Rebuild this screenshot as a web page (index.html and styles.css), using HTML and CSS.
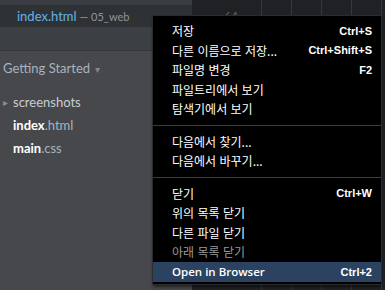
FILE: index.html
```html
<!DOCTYPE html>
<html lang="ko">
<head>
<meta charset="utf-8">
<link rel="stylesheet" href="styles.css">
</head>
<body>
<div class="app">
  <aside class="sidebar">
    <div class="top-strip"></div>
    <div class="open-file"><span class="fname">index.html</span><span class="fdir">— 05_web</span></div>
    <div class="band"></div>
    <div class="tree">
      <div class="project">Getting Started <span class="caret">▾</span></div>
      <div class="node folder"><span class="tri">▸</span>screenshots</div>
      <div class="node"><b>index</b>.html</div>
      <div class="node"><b>main</b>.css</div>
    </div>
  </aside>
  <main class="editor">
    <div class="col gutter"><span class="lineno">64</span></div>
    <div class="col"></div>
    <div class="col"></div>
    <div class="col"></div>
    <div class="col"></div>
    <div class="col last"></div>
  </main>
  <div class="menu">
    <div class="item"><span class="label">저장</span><span class="key">Ctrl+S</span></div>
    <div class="item"><span class="label">다른 이름으로 저장...</span><span class="key">Ctrl+Shift+S</span></div>
    <div class="item"><span class="label">파일명 변경</span><span class="key">F2</span></div>
    <div class="item"><span class="label">파일트리에서 보기</span></div>
    <div class="item"><span class="label">탐색기에서 보기</span></div>
    <div class="sep"></div>
    <div class="item"><span class="label">다음에서 찾기...</span></div>
    <div class="item"><span class="label">다음에서 바꾸기...</span></div>
    <div class="sep"></div>
    <div class="item"><span class="label">닫기</span><span class="key">Ctrl+W</span></div>
    <div class="item"><span class="label">위의 목록 닫기</span></div>
    <div class="item"><span class="label">다른 파일 닫기</span></div>
    <div class="item disabled"><span class="label">아래 목록 닫기</span></div>
    <div class="item active"><span class="label en">Open in Browser</span><span class="key">Ctrl+2</span></div>
  </div>
</div>
</body>
</html>
```

FILE: styles.css
```css
* { box-sizing: border-box; }
html, body { margin: 0; padding: 0; }
body {
  width: 385px;
  height: 290px;
  overflow: hidden;
  background: #1f2124;
  font-family: Lato, "Noto Sans", sans-serif;
}
.app {
  position: relative;
  display: flex;
  width: 385px;
  height: 290px;
  overflow: hidden;
}
.sidebar {
  width: 192px;
  flex: none;
  display: flex;
  flex-direction: column;
  background: #46484c;
}
.top-strip { height: 5px; background: #3a3d41; }
.open-file {
  height: 22px;
  background: #2f3235;
  padding-left: 17px;
  display: flex;
  align-items: center;
  gap: 3px;
  white-space: nowrap;
}
.fname { color: #63b3e8; font-size: 13px; }
.fdir { color: #8e959c; font-size: 11px; }
.band {
  height: 24px;
  background: #3c3f43;
  border-bottom: 1px solid #333538;
}
.tree { padding-top: 8px; }
.project {
  height: 18px;
  line-height: 18px;
  padding-left: 3px;
  color: #a9b3bc;
  font-size: 13px;
  margin-bottom: 13.5px;
}
.caret { color: #7f868d; font-size: 10px; margin-left: 2px; }
.node {
  height: 23px;
  line-height: 23px;
  padding-left: 13px;
  color: #a7b3bf;
  font-size: 13px;
  position: relative;
}
.node b { color: #ffffff; font-weight: 700; }
.node.folder { color: #c9ced3; }
.tri {
  position: absolute;
  left: 3px;
  top: 0;
  color: #868c92;
  font-size: 10px;
}
.editor {
  flex: 1;
  min-width: 0;
  display: flex;
  background: #1f2124;
}
.col {
  width: 30px;
  flex: none;
  border-right: 1px solid #34373b;
}
.col.gutter { width: 70px; padding: 4px 0 0 32px; }
.col.last { flex: 1; min-width: 0; border-right: 0; }
.lineno { color: #5e646c; font-size: 12px; }
.menu {
  position: absolute;
  left: 152px;
  top: 15px;
  width: 230px;
  background: #000;
  border: 1px solid #2a2c2f;
  padding: 5px 0 2px;
  box-shadow: 0 3px 3px -1px rgba(0,0,0,0.55);
}
.item {
  height: 19.5px;
  display: flex;
  align-items: center;
  justify-content: space-between;
  padding: 0 9px 0 19px;
  color: #ffffff;
  white-space: nowrap;
}
.label {
  font-family: "Noto Sans CJK KR", sans-serif;
  font-size: 12px;
}
.label.en {
  font-family: "Open Sans", sans-serif;
  font-weight: 600;
  font-size: 11.5px;
}
.key {
  font-family: "Liberation Sans", sans-serif;
  font-weight: 700;
  font-size: 11px;
}
.item.disabled { color: #9a9a9a; }
.item.active { background: #2b4361; height: 20px; }
.sep {
  height: 1px;
  background: #3a3b3d;
  margin: 6px 0;
}
```
